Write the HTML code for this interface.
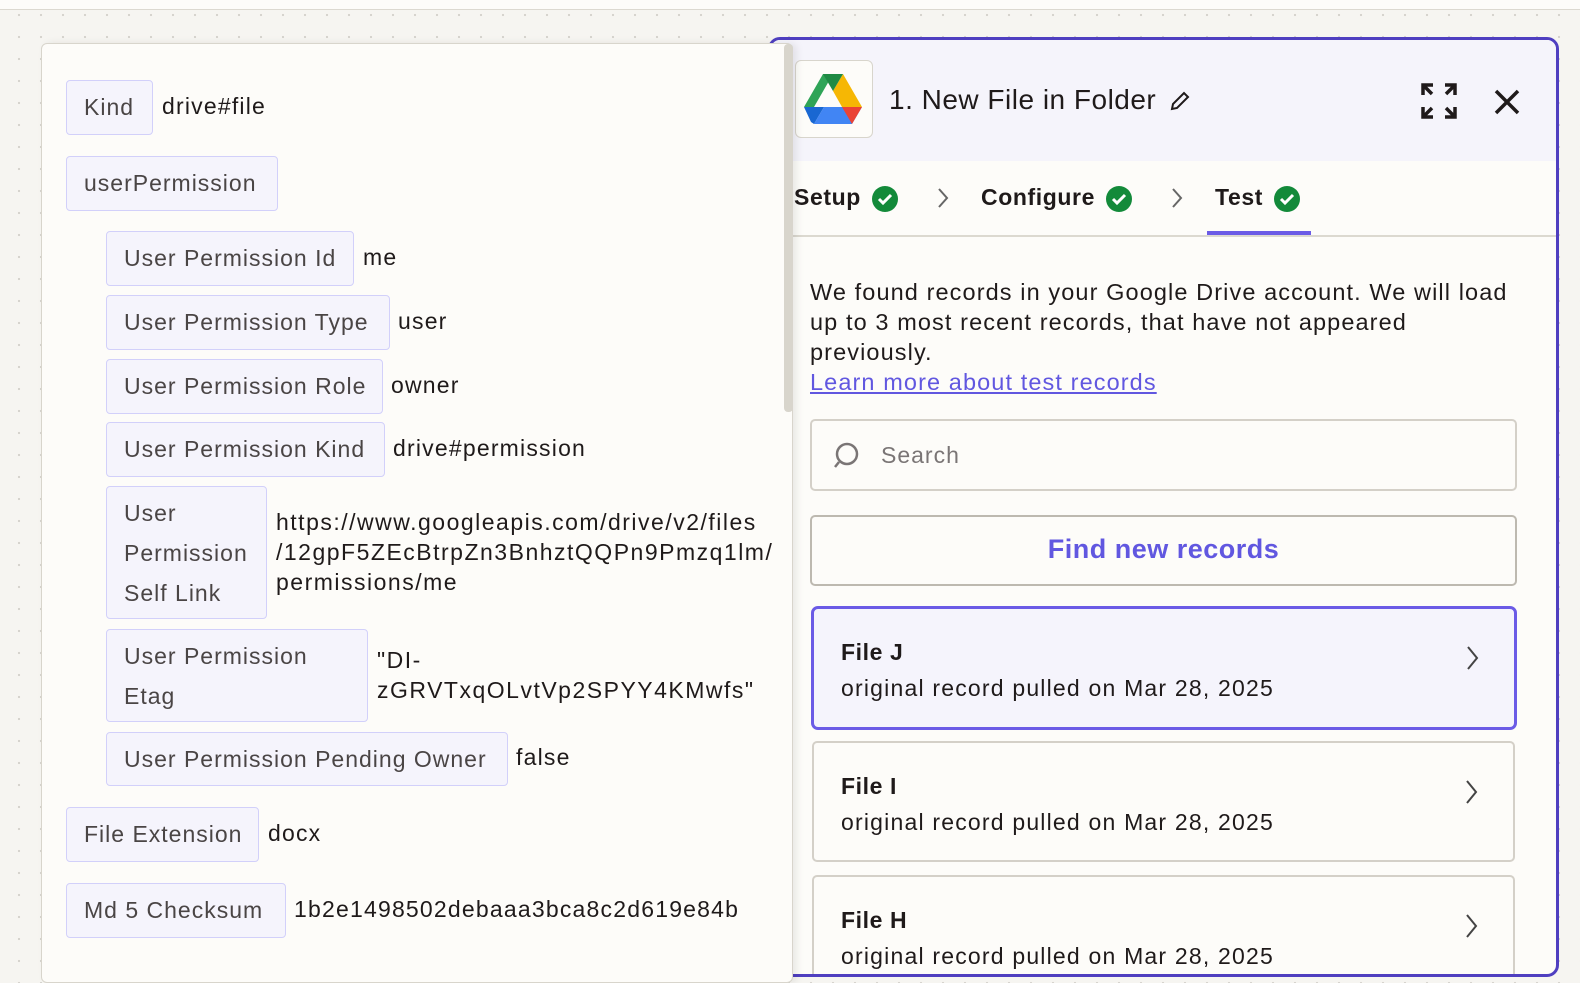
<!DOCTYPE html>
<html><head><meta charset="utf-8"><style>
*{margin:0;padding:0;box-sizing:border-box}
body{width:1580px;height:956px;overflow:hidden;position:relative;font-family:"Liberation Sans",sans-serif;background:#f6f5f1;
background-image:radial-gradient(circle,#d4d2cc 1px,transparent 1.3px);background-size:22px 22px;background-position:8px 4px;color:#1f1a1a}
.top{position:absolute;left:0;top:0;width:1580px;height:10px;background:#fdfcf9;border-bottom:1.5px solid #dcd9d0}
.a{position:absolute}
.card{position:absolute;left:41px;top:43px;width:752px;height:940px;background:#fdfcf9;border:1.5px solid #d8d5cc;border-radius:6px;box-shadow:4px 0 8px rgba(0,0,0,.08);z-index:3}
.sb{position:absolute;left:742px;top:0;width:9px;height:368px;background:#d8d5cc;border-radius:4px}
.chip{position:absolute;background:#f5f4fc;border:1.5px solid #d2d0fa;border-radius:4px;color:#4a4545;font-size:23px;letter-spacing:1px;padding:0 17px;display:flex;align-items:center;white-space:nowrap}
.ml{display:block;padding-top:12px;line-height:40px}
.v{position:absolute;font-size:23px;letter-spacing:1.2px;color:#1f1a1a;white-space:nowrap}
.panel{position:absolute;left:768px;top:37px;width:791px;height:940px;border:3px solid #4f3fc0;border-radius:12px;background:#fdfcf9;overflow:hidden;z-index:1}
.hdr{position:absolute;left:0;top:0;width:100%;height:121px;background:#f5f4fb}
.tab{position:absolute;top:144px;font-size:23px;font-weight:bold;letter-spacing:0.6px;color:#1f1a1a}
.chk{position:absolute;width:26px;height:26px;border-radius:50%;background:#138a3a}
.box{position:absolute;border:2px solid #d4d0c8;border-radius:5px;background:#fdfcf9}
.rec .t{position:absolute;left:27px;top:30px;font-size:23px;font-weight:bold;letter-spacing:0.6px}
.rec .s{position:absolute;left:27px;top:66px;font-size:23px;letter-spacing:1.2px}
.rec svg{position:absolute;right:34px;top:36px}
</style></head><body>
<div class="top"></div>

<div class="panel">
 <div class="hdr"></div>
 <div class="a" style="left:24px;top:20px;width:78px;height:78px;border:1.5px solid #d8d5cc;border-radius:6px;background:#fdfcf9"></div>
 <svg class="a" style="left:33px;top:34px" width="58" height="50" viewBox="0 0 58 50">
  <polygon points="19,0 29,0 10,33 0,33" fill="#2fa457"/>
  <polygon points="39,0 58,33 38,33 29,17" fill="#f6b704"/>
  <polygon points="19,0 39,0 29,17" fill="#1f8a44"/>
  <polygon points="0,33 20,33 10,50 7,48" fill="#1967d2"/>
  <polygon points="20,33 58,33 48,50 10,50" fill="#4185f4"/>
  <polygon points="38,33 58,33 48,50" fill="#ea4335"/>
 </svg>
 <div class="a" style="left:118px;top:44px;font-size:28px;letter-spacing:0.5px;color:#1f1a1a">1. New File in Folder</div>
 <svg class="a" style="left:397px;top:49px" width="24" height="24" viewBox="0 0 24 24" fill="none" stroke="#1f1a1a" stroke-width="2"><path d="M4 20l1-5L16 4l4 4L9 19z"/></svg>
 <svg class="a" style="left:650px;top:43px" width="36" height="36" viewBox="0 0 36 36" stroke="#1f1a1a" stroke-width="3.5" fill="none"><path d="M2 12V2h10M2 2l9 9M34 12V2H24M34 2l-9 9M2 24v10h10M2 34l9-9M34 24v10H24M34 34l-9-9"/></svg>
 <svg class="a" style="left:723px;top:49px" width="26" height="26" viewBox="0 0 26 26" stroke="#1f1a1a" stroke-width="3.5"><path d="M2 2l22 22M24 2L2 24"/></svg>

 <div class="tab" style="left:23px">Setup</div>
 <div class="chk" style="left:101px;top:146px"></div>
 <div class="tab" style="left:210px">Configure</div>
 <div class="chk" style="left:335px;top:146px"></div>
 <div class="tab" style="left:444px">Test</div>
 <div class="chk" style="left:503px;top:146px"></div>
 <svg class="a" style="left:101px;top:146px" width="26" height="26"><path d="M7 13l4 4 8-8" stroke="#fff" stroke-width="3" fill="none"/></svg>
 <svg class="a" style="left:335px;top:146px" width="26" height="26"><path d="M7 13l4 4 8-8" stroke="#fff" stroke-width="3" fill="none"/></svg>
 <svg class="a" style="left:503px;top:146px" width="26" height="26"><path d="M7 13l4 4 8-8" stroke="#fff" stroke-width="3" fill="none"/></svg>
 <svg class="a" style="left:166px;top:147px" width="12" height="22"><path d="M2 2l8 9-8 9" stroke="#666" stroke-width="2" fill="none"/></svg>
 <svg class="a" style="left:400px;top:147px" width="12" height="22"><path d="M2 2l8 9-8 9" stroke="#666" stroke-width="2" fill="none"/></svg>
 <div class="a" style="left:436px;top:191px;width:104px;height:4px;background:#6b5be6"></div>
 <div class="a" style="left:0;top:195px;width:100%;height:2px;background:#dcd9d0"></div>

 <div class="a" style="left:39px;top:237px;width:720px;font-size:23.5px;letter-spacing:1.1px;line-height:30px;color:#1f1a1a">We found records in your Google Drive account. We will load up to 3 most recent records, that have not appeared previously.<br><span style="color:#6157e0;text-decoration:underline">Learn more about test records</span></div>

 <div class="box" style="left:39px;top:379px;width:707px;height:72px"></div>
 <svg class="a" style="left:57px;top:400px" width="34" height="34" viewBox="0 0 34 34" fill="none" stroke="#7a7575" stroke-width="2.5"><circle cx="19" cy="14" r="10"/><path d="M11 22l-4 5"/></svg>
 <div class="a" style="left:110px;top:402px;font-size:23px;letter-spacing:1px;color:#7a7575">Search</div>

 <div class="box" style="left:39px;top:475px;width:707px;height:71px;border-color:#bdb9b0"></div>
 <div class="a" style="left:39px;top:494px;width:707px;text-align:center;font-size:27px;font-weight:bold;letter-spacing:0.5px;color:#6157e0">Find new records</div>

 <div class="box rec" style="left:40px;top:566px;width:706px;height:124px;border:3px solid #6b5be6;background:#f5f4fc;border-radius:7px"><div class="t">File J</div><div class="s">original record pulled on Mar 28, 2025</div><svg width="14" height="26"><path d="M2 2l9 11-9 11" stroke="#444" stroke-width="2" fill="none"/></svg></div>
 <div class="box rec" style="left:41px;top:701px;width:703px;height:121px"><div class="t">File I</div><div class="s">original record pulled on Mar 28, 2025</div><svg width="14" height="26"><path d="M2 2l9 11-9 11" stroke="#444" stroke-width="2" fill="none"/></svg></div>
 <div class="box rec" style="left:41px;top:835px;width:703px;height:121px"><div class="t">File H</div><div class="s">original record pulled on Mar 28, 2025</div><svg width="14" height="26"><path d="M2 2l9 11-9 11" stroke="#444" stroke-width="2" fill="none"/></svg></div>
</div>

<div class="card">
 <div class="sb"></div>
</div>
<div style="position:absolute;left:0;top:0;z-index:4">
 <div class="chip" style="left:66px;top:80px;width:87px;height:55px">Kind</div><div class="v" style="left:162px;top:93px">drive#file</div>
 <div class="chip" style="left:66px;top:156px;width:212px;height:55px">userPermission</div>
 <div class="chip" style="left:106px;top:231px;width:248px;height:55px">User Permission Id</div><div class="v" style="left:363px;top:244px">me</div>
 <div class="chip" style="left:106px;top:295px;width:284px;height:55px">User Permission Type</div><div class="v" style="left:398px;top:308px">user</div>
 <div class="chip" style="left:106px;top:359px;width:277px;height:55px">User Permission Role</div><div class="v" style="left:391px;top:372px">owner</div>
 <div class="chip" style="left:106px;top:422px;width:279px;height:55px">User Permission Kind</div><div class="v" style="left:393px;top:435px">drive#permission</div>
 <div class="chip ml" style="left:106px;top:486px;width:161px;height:133px;padding-top:6px">User<br>Permission<br>Self Link</div>
 <div class="v" style="left:276px;top:507px;line-height:30px;letter-spacing:1.5px">https://www.googleapis.com/drive/v2/files<br>/12gpF5ZEcBtrpZn3BnhztQQPn9Pmzq1lm/<br>permissions/me</div>
 <div class="chip ml" style="left:106px;top:629px;width:262px;height:93px;padding-top:6px">User Permission<br>Etag</div>
 <div class="v" style="left:377px;top:645px;line-height:30px;letter-spacing:1.5px">"DI-<br>zGRVTxqOLvtVp2SPYY4KMwfs"</div>
 <div class="chip" style="left:106px;top:732px;width:402px;height:54px">User Permission Pending Owner</div><div class="v" style="left:516px;top:744px">false</div>
 <div class="chip" style="left:66px;top:807px;width:193px;height:55px">File Extension</div><div class="v" style="left:268px;top:820px">docx</div>
 <div class="chip" style="left:66px;top:883px;width:220px;height:55px">Md 5 Checksum</div><div class="v" style="left:294px;top:896px">1b2e1498502debaaa3bca8c2d619e84b</div>
</div>
</body></html>
